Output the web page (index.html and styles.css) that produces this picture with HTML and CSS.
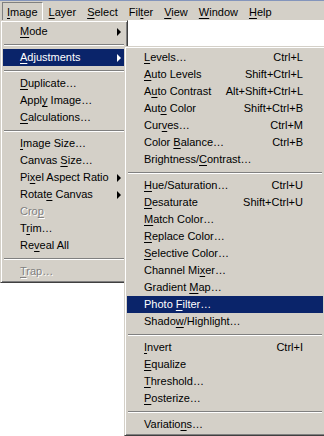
FILE: index.html
```html
<!DOCTYPE html>
<html lang="en">
<head>
  <meta charset="UTF-8">
  <title>Image menu</title>
  <link rel="stylesheet" href="styles.css">
</head>
<body>
  <div class="menubar">
    <div class="bar-item active"><u>I</u>mage</div>
    <div class="bar-item"><u>L</u>ayer</div>
    <div class="bar-item"><u>S</u>elect</div>
    <div class="bar-item">Fil<u>t</u>er</div>
    <div class="bar-item"><u>V</u>iew</div>
    <div class="bar-item"><u>W</u>indow</div>
    <div class="bar-item"><u>H</u>elp</div>
  </div>

  <div class="menus">
    <div class="menu menu-main">
      <div class="item"><span><u>M</u>ode</span><span class="arrow"></span></div>
      <div class="sep"></div>
      <div class="item selected"><span><u>A</u>djustments</span><span class="arrow"></span></div>
      <div class="sep"></div>
      <div class="item"><span><u>D</u>uplicate…</span></div>
      <div class="item"><span>Appl<u>y</u> Image…</span></div>
      <div class="item"><span><u>C</u>alculations…</span></div>
      <div class="sep"></div>
      <div class="item"><span><u>I</u>mage Size…</span></div>
      <div class="item"><span>Canvas <u>S</u>ize…</span></div>
      <div class="item"><span>Pi<u>x</u>el Aspect Ratio</span><span class="arrow"></span></div>
      <div class="item"><span>Rotat<u>e</u> Canvas</span><span class="arrow"></span></div>
      <div class="item disabled"><span>Cro<u>p</u></span></div>
      <div class="item"><span>T<u>r</u>im…</span></div>
      <div class="item"><span>Re<u>v</u>eal All</span></div>
      <div class="sep"></div>
      <div class="item disabled"><span><u>T</u>rap…</span></div>
    </div>

    <div class="menu menu-sub">
      <div class="item"><span><u>L</u>evels…</span><span class="key">Ctrl+L</span></div>
      <div class="item"><span><u>A</u>uto Levels</span><span class="key">Shift+Ctrl+L</span></div>
      <div class="item"><span>A<u>u</u>to Contrast</span><span class="key">Alt+Shift+Ctrl+L</span></div>
      <div class="item"><span>Aut<u>o</u> Color</span><span class="key">Shift+Ctrl+B</span></div>
      <div class="item"><span>Cur<u>v</u>es…</span><span class="key">Ctrl+M</span></div>
      <div class="item"><span>Color <u>B</u>alance…</span><span class="key">Ctrl+B</span></div>
      <div class="item"><span>Brightness/<u>C</u>ontrast…</span></div>
      <div class="sep"></div>
      <div class="item"><span><u>H</u>ue/Saturation…</span><span class="key">Ctrl+U</span></div>
      <div class="item"><span><u>D</u>esaturate</span><span class="key">Shift+Ctrl+U</span></div>
      <div class="item"><span><u>M</u>atch Color…</span></div>
      <div class="item"><span><u>R</u>eplace Color…</span></div>
      <div class="item"><span><u>S</u>elective Color…</span></div>
      <div class="item"><span>Channel Mi<u>x</u>er…</span></div>
      <div class="item"><span>Gradient <u>M</u>ap…</span></div>
      <div class="item selected"><span>Photo <u>F</u>ilter…</span></div>
      <div class="item"><span>Shado<u>w</u>/Highlight…</span></div>
      <div class="sep"></div>
      <div class="item"><span><u>I</u>nvert</span><span class="key">Ctrl+I</span></div>
      <div class="item"><span><u>E</u>qualize</span></div>
      <div class="item"><span><u>T</u>hreshold…</span></div>
      <div class="item"><span><u>P</u>osterize…</span></div>
      <div class="sep"></div>
      <div class="item"><span>Variatio<u>n</u>s…</span></div>
    </div>
  </div>
</body>
</html>
```

FILE: styles.css
```css
body {
  margin: 0;
  width: 324px;
  height: 436px;
  overflow: hidden;
  background-color: #fff;
  font-family: "Liberation Sans", Arial, sans-serif;
  font-size: 11px;
  color: #000;
}

u {
  text-decoration: underline;
  text-underline-offset: 2px;
  text-decoration-skip-ink: none;
}

/* menu bar */

.menubar {
  display: flex;
  height: 19px;
  padding-left: 2px;
  border-top: 1px solid #8495bc;
  background-color: #d4d0c8;
}

.bar-item {
  margin-top: 1px;
  margin-right: 1px;
  padding: 3px 4px 0;
  line-height: 13px;
  height: 14px;
  border: 1px solid transparent;
  white-space: nowrap;
}

.bar-item.active {
  border-color: #808080 #fff #fff #808080;
}

/* dropdowns */

.menus {
  display: flex;
  align-items: flex-start;
}

.menu {
  flex-shrink: 0;
  box-sizing: border-box;
  padding: 2px;
  background-color: #d4d0c8;
  border: 1px solid;
  border-color: #d4d0c8 #404040 #404040 #d4d0c8;
  box-shadow: inset 1px 1px 0 #fff, inset -1px -1px 0 #808080;
}

.menu-main {
  width: 128px;
}

.menu-sub {
  width: 202px;
  margin-top: 26px;
  margin-left: -4px;
}

.item {
  display: flex;
  align-items: center;
  justify-content: space-between;
  height: 16px;
  line-height: 16px;
  padding: 0 20px 1px 17px;
  white-space: nowrap;
}

.menu-main .item {
  padding-right: 4px;
}

.item.selected {
  background-color: #0a246a;
  color: #fff;
}

.item.disabled {
  color: #808080;
  text-shadow: 1px 1px 0 #fff;
}

.key {
  margin-left: 12px;
}

.arrow {
  width: 0;
  height: 0;
  margin-top: 1px;
  border-left: 4px solid currentColor;
  border-top: 4px solid transparent;
  border-bottom: 4px solid transparent;
}

.sep {
  margin: 4px 1px 3px;
  border-top: 1px solid #808080;
  border-bottom: 1px solid #fff;
}
```
